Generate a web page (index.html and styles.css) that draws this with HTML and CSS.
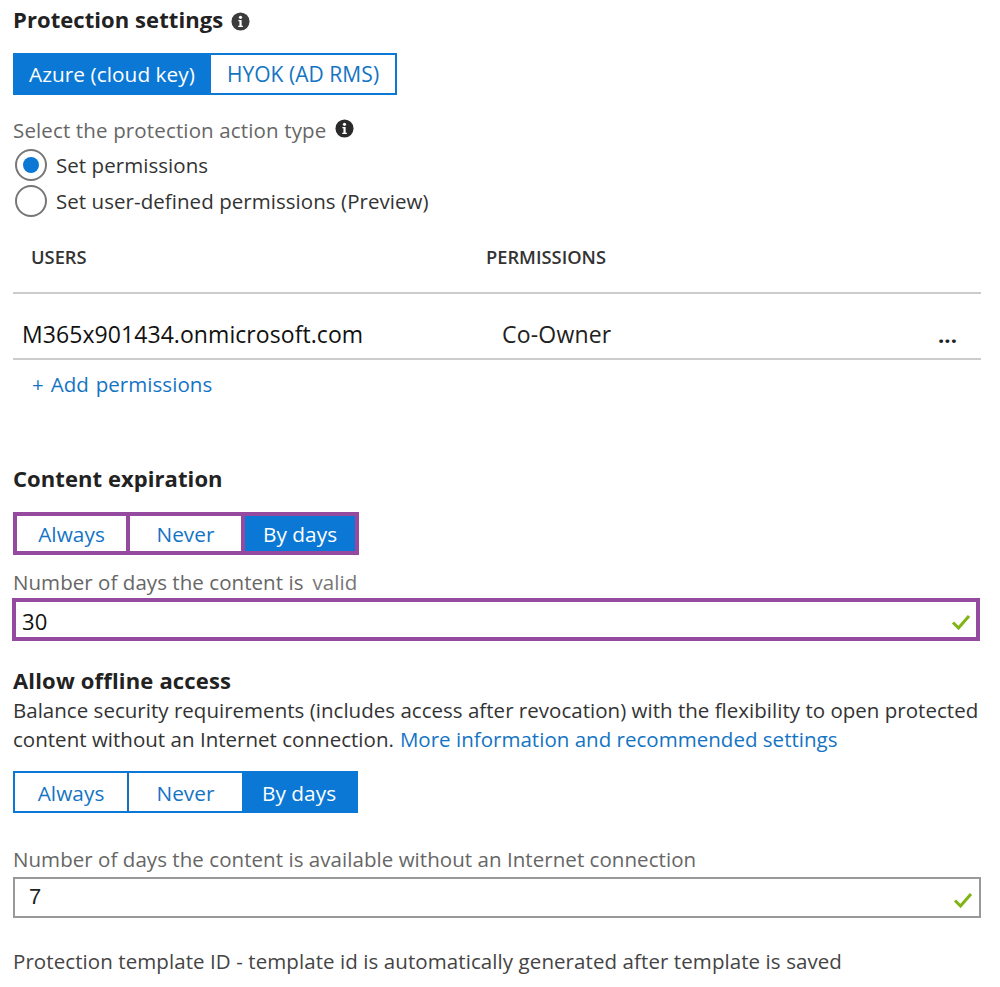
FILE: index.html
```html
<!DOCTYPE html>
<html lang="en">
<head>
<meta charset="utf-8">
<title>Protection settings</title>
<link rel="stylesheet" href="styles.css">
</head>
<body>
<main class="page">
  <h2 class="heading h-protection">Protection settings
    <svg class="info" viewBox="0 0 20 20"><circle cx="10" cy="10" r="9.5" fill="#3c3c3c"/><circle cx="10" cy="5.6" r="1.7" fill="#fff"/><path d="M7.8 8.3h3.4v6.2h1.3v1.4H7.6v-1.4h1.3V9.7H7.8z" fill="#fff"/></svg>
  </h2>
  <div class="seg seg-azure">
    <span class="opt on w-azure">Azure (cloud key)</span>
    <span class="opt w-hyok">HYOK (AD RMS)</span>
  </div>
  <div class="label l-action">Select the protection action type
    <svg class="info" viewBox="0 0 20 20"><circle cx="10" cy="10" r="9.5" fill="#2a2a2a"/><circle cx="10" cy="5.6" r="1.7" fill="#fff"/><path d="M7.8 8.3h3.4v6.2h1.3v1.4H7.6v-1.4h1.3V9.7H7.8z" fill="#fff"/></svg>
  </div>
  <div class="radio r-first"><span class="dot checked"></span>Set permissions</div>
  <div class="radio"><span class="dot"></span>Set user-defined permissions (Preview)</div>

  <div class="thead">
    <span class="col-users">USERS</span>
    <span>PERMISSIONS</span>
  </div>
  <div class="trow">
    <span class="cell-user">M365x901434.onmicrosoft.com</span>
    <span class="cell-perm">Co-Owner</span>
    <span class="more">...</span>
  </div>
  <div class="add">+ Add permissions</div>

  <h2 class="heading h-expiry">Content expiration</h2>
  <div class="seg-marked">
    <span class="opt-m w-a1">Always</span>
    <span class="opt-m w-n1">Never</span>
    <span class="opt-m on w-b1">By days</span>
  </div>
  <div class="label l-valid">Number of days the content is <span class="valid">valid</span></div>
  <div class="field marked">
    <span class="val-30">30</span>
    <svg class="check" viewBox="0 0 20 16"><path d="M2 8.5l5.5 5.5L18 2" fill="none" stroke="#7fb414" stroke-width="3"/></svg>
  </div>

  <h2 class="heading h-offline">Allow offline access</h2>
  <div class="para">
    <div>Balance security requirements (includes access after revocation) with the flexibility to open protected</div>
    <div class="para-last"><span>content without an Internet connection.</span><span class="link">More information and recommended settings</span></div>
  </div>
  <div class="seg seg-days">
    <span class="opt w-a2">Always</span>
    <span class="opt w-n2">Never</span>
    <span class="opt on w-b2">By days</span>
  </div>
  <div class="label l-offline">Number of days the content is available without an Internet connection</div>
  <div class="field plain">
    <span class="val-7">7</span>
    <svg class="check" viewBox="0 0 20 16"><path d="M2 8.5l5.5 5.5L18 2" fill="none" stroke="#7fb414" stroke-width="3"/></svg>
  </div>
  <div class="foot">Protection template ID - template id is automatically generated after template is saved</div>
</main>
</body>
</html>
```
FILE: styles.css
```css
* { box-sizing: border-box; }
html, body { margin: 0; background: #fff; }
body { font-family: "Open Sans", "Noto Sans", sans-serif; font-size: 20.5px; color: #333; letter-spacing: 0.05px; }
.page { width: 1000px; height: 987px; overflow: hidden; padding: 0 13px; }

.heading { margin: 0; font-size: 22px; font-weight: 700; line-height: 30px; color: #222; letter-spacing: 0.07px; }
.h-protection { margin-top: 4px; display: flex; align-items: center; gap: 8px; }
.h-protection .info { margin-top: 5px; }
.h-expiry { margin-top: 65px; }
.h-offline { margin-top: 24px; margin-bottom: 1px; letter-spacing: 0.17px; }
.info { width: 19px; height: 19px; flex: none; }

.seg { display: flex; height: 42px; border: 2px solid #0a78d4; width: max-content; font-size: 20.8px; }
.seg-azure { margin-top: 19px; }
.seg-days { margin-top: 17px; }
.opt { display: flex; align-items: center; justify-content: center; color: #1474c4; }
.opt.on { background: #0a78d4; color: #fff; }
.w-azure { width: 196px; padding-right: 2px; }
.w-hyok { width: 184px; font-size: 21px; }
.w-a2 { width: 112px; padding-top: 2px; }
.w-n2 { width: 115px; padding-top: 2px; border-left: 2px solid #1a6fb5; }
.w-b2 { width: 114px; padding-top: 2px; }

.label { color: #666; line-height: 26px; }
.l-action { margin-top: 22px; display: flex; align-items: center; gap: 9px; letter-spacing: 0.14px; }
.l-action .info { margin-top: -3px; }
.l-valid { margin-top: 14px; line-height: 26px; display: flex; gap: 9px; }
.valid { color: #777; }
.l-offline { margin-top: 33px; }

.radio { display: flex; align-items: center; gap: 9px; height: 36px; padding-left: 2px; }
.r-first { margin-top: 4px; }
.dot { width: 32px; height: 32px; border-radius: 50%; border: 2px solid #777; background: #fff; flex: none; display: flex; align-items: center; justify-content: center; }
.dot.checked::after { content: ""; width: 16px; height: 16px; border-radius: 50%; background: #0a78d4; }

.thead { margin-top: 20px; width: 968px; height: 55px; border-bottom: 2px solid #ccc; display: flex; font-size: 18.3px; font-weight: 600; color: #333; padding: 3px 0 0 18px; line-height: 30px; letter-spacing: 0; }
.col-users { width: 455px; }
.trow { width: 968px; height: 66px; border-bottom: 2px solid #ccc; display: flex; align-items: center; padding: 16px 24px 0 9px; color: #111; font-size: 23px; letter-spacing: 0.07px; }
.cell-user { width: 480px; }
.cell-perm { flex: 1; color: #222; letter-spacing: 0.2px; }
.more { font-weight: 700; color: #222; line-height: 1; font-size: 22px; }
.add { margin: 10px 0 0 19px; color: #1474c4; line-height: 28px; word-spacing: 1.5px; }

.seg-marked { margin-top: 19px; display: flex; width: 346px; height: 43px; border: 4px solid #954a9f; background: #954a9f; gap: 4px; font-size: 20.8px; }
.opt-m { display: flex; align-items: center; justify-content: center; background: #fff; color: #1474c4; }
.opt-m.on { background: #0a78d4; color: #fff; }
.w-a1 { width: 109px; }
.w-n1 { width: 111px; }
.w-b1 { width: 110px; }

.field { display: flex; align-items: center; justify-content: space-between; color: #111; }
.marked { margin: 3px 0 0 -1px; width: 968px; height: 43px; border: 4px solid #954a9f; padding: 2px 0 0 6px; font-size: 22px; }
.plain { margin-top: 5px; width: 968px; height: 41px; border: 2px solid #999; padding: 0 0 2px 14px; }
.check { width: 20px; height: 16px; margin-right: 5px; margin-top: 3px; }
.plain .check { margin-right: 6px; margin-top: 6px; }
.val-7 { color: #222; font-family: "Liberation Sans", sans-serif; font-size: 22px; }

.para { line-height: 29px; color: #333; width: 975px; letter-spacing: 0.02px; }
.para-last { display: flex; gap: 6px; }
.link { color: #1474c4; }
.foot { margin-top: 29px; line-height: 28px; color: #444; letter-spacing: 0.08px; }
```
